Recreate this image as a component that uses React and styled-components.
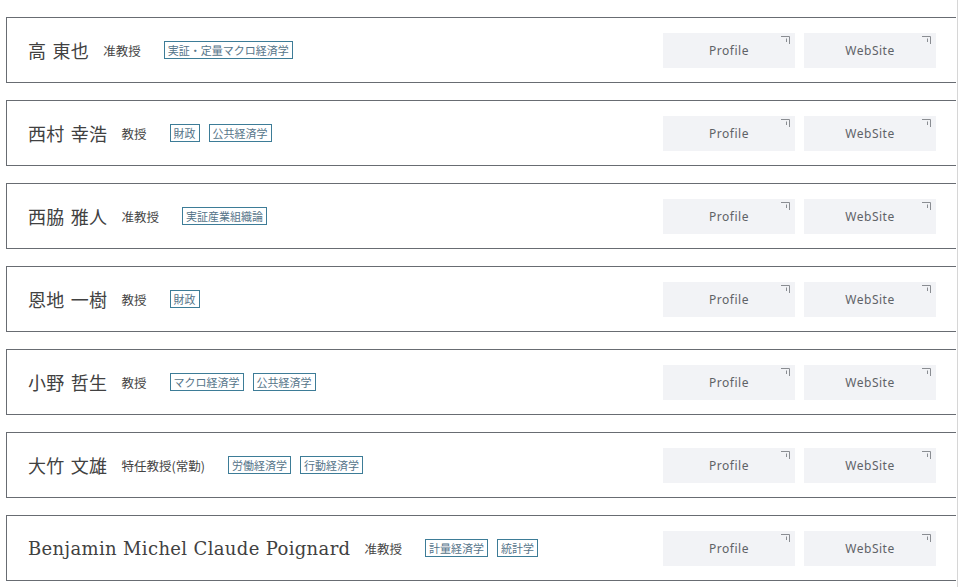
import * as React from "react";
import styled, { createGlobalStyle } from "styled-components";

const GlobalStyle = createGlobalStyle`
    html, body {
        margin: 0;
        padding: 0;
        background: #fff;
    }
    body {
        font-family: "Noto Sans", "Noto Sans CJK JP", sans-serif;
    }
`;

const members = [
    { name: "高 東也", title: "准教授", tags: ["実証・定量マクロ経済学"] },
    { name: "西村 幸浩", title: "教授", tags: ["財政", "公共経済学"] },
    { name: "西脇 雅人", title: "准教授", tags: ["実証産業組織論"] },
    { name: "恩地 一樹", title: "教授", tags: ["財政"] },
    { name: "小野 哲生", title: "教授", tags: ["マクロ経済学", "公共経済学"] },
    { name: "大竹 文雄", title: "特任教授(常勤)", tags: ["労働経済学", "行動経済学"] },
    { name: "Benjamin Michel Claude Poignard", title: "准教授", tags: ["計量経済学", "統計学"] },
];

const CornerIcon = () => (
    <svg width="9" height="9" viewBox="0 0 9 9" fill="none" stroke="#8a8d92" strokeWidth="1">
        <path d="M0 0.5 H8.5 V8" />
        <path d="M5.5 2.5 V6" />
    </svg>
);

const MemberList = () => {
    return (
        <Page>
            {members.map((m) => (
                <Card key={m.name}>
                    <Info>
                        <Name>{m.name}</Name>
                        <Title>{m.title}</Title>
                        <Tags>
                            {m.tags.map((t) => (
                                <Tag key={t}>{t}</Tag>
                            ))}
                        </Tags>
                    </Info>
                    <Links>
                        <LinkButton href="#">
                            Profile
                            <IconSlot><CornerIcon /></IconSlot>
                        </LinkButton>
                        <LinkButton href="#">
                            WebSite
                            <IconSlot><CornerIcon /></IconSlot>
                        </LinkButton>
                    </Links>
                </Card>
            ))}
        </Page>
    );
};

const Page = styled.div`
    box-sizing: border-box;
    width: 958px;
    min-height: 587px;
    padding: 17px 1px 6px 6px;
    border-right: 1px solid #d6d6d6;
    display: flex;
    flex-direction: column;
    gap: 17px;
`;

const Card = styled.div`
    box-sizing: border-box;
    height: 66px;
    border: 1px solid #686c72;
    border-right: none;
    padding: 0 20px 0 21px;
    display: flex;
    align-items: center;
    justify-content: space-between;
`;

const Info = styled.div`
    display: flex;
    align-items: center;
`;

const Name = styled.h3`
    margin: 0 14px 0 0;
    font-family: "DejaVu Serif", "Noto Sans CJK JP", serif;
    font-weight: 400;
    font-size: 18px;
    letter-spacing: 0.35px;
    color: #414141;
    white-space: nowrap;
`;

const Title = styled.span`
    font-family: "Noto Sans CJK JP", sans-serif;
    font-size: 12.5px;
    color: #444;
    margin-right: 23px;
    white-space: nowrap;
`;

const Tags = styled.div`
    display: flex;
    gap: 9px;
`;

const Tag = styled.span`
    box-sizing: border-box;
    height: 18px;
    padding: 0 3px;
    border: 1px solid #3d7c97;
    font-family: "Noto Sans CJK JP", sans-serif;
    font-size: 11px;
    line-height: 16px;
    color: #557489;
    white-space: nowrap;
`;

const Links = styled.div`
    display: flex;
    gap: 9px;
`;

const LinkButton = styled.a`
    position: relative;
    width: 132px;
    height: 35px;
    background: #f2f3f6;
    display: flex;
    align-items: center;
    justify-content: center;
    font-family: "Noto Sans", "Noto Sans CJK JP", sans-serif;
    font-size: 12px;
    letter-spacing: 0.5px;
    color: #5f6267;
    text-decoration: none;
`;

const IconSlot = styled.span`
    position: absolute;
    top: 3px;
    right: 5px;
    display: flex;
`;

export default function App() {
    return (
        <>
            <GlobalStyle />
            <MemberList />
        </>
    );
}
